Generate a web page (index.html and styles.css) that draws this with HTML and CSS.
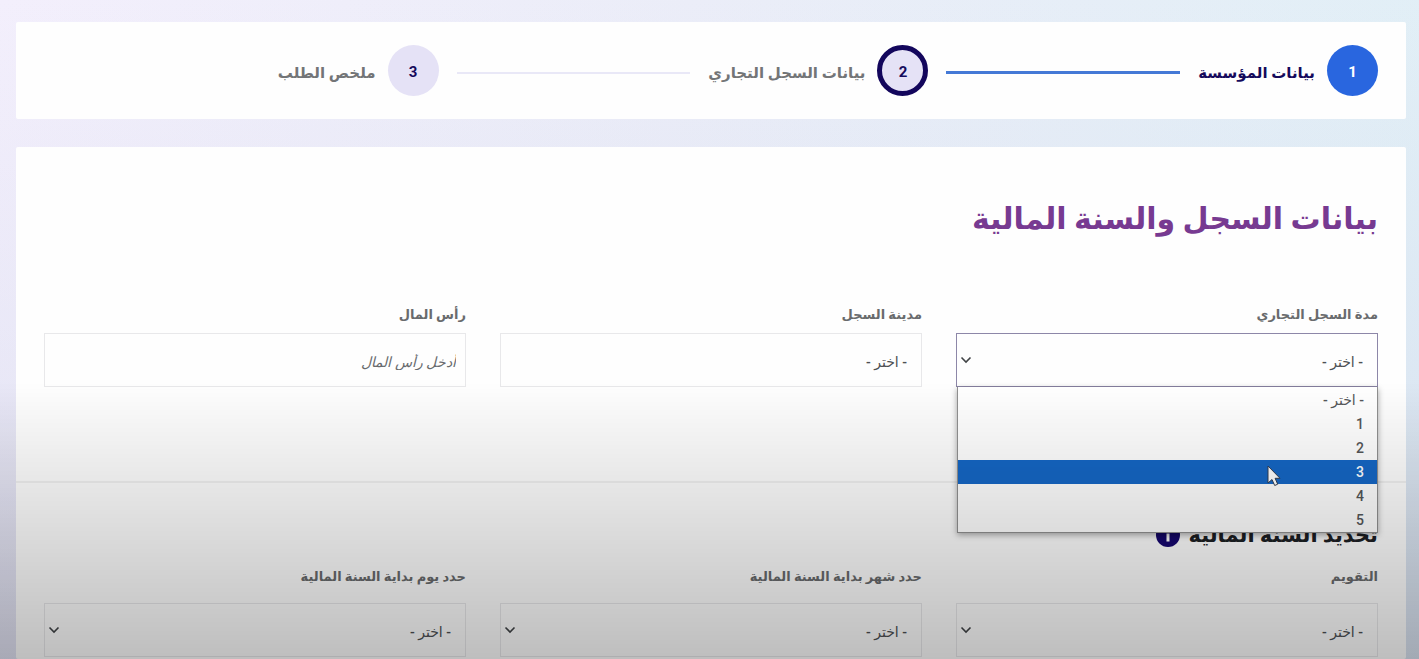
FILE: index.html
```html
<!DOCTYPE html>
<html lang="ar" dir="rtl">
<head>
<meta charset="utf-8">
<meta name="viewport" content="width=device-width, initial-scale=1">
<title>بيانات السجل والسنة المالية</title>
<link rel="stylesheet" href="styles.css">
</head>
<body>
<main class="page">
  <ol class="card stepper">
    <li class="step step-done"><span class="step-number">1</span><span class="step-label">بيانات المؤسسة</span><span class="step-line"></span></li>
    <li class="step step-current" aria-current="step"><span class="step-number">2</span><span class="step-label">بيانات السجل التجاري</span><span class="step-line"></span></li>
    <li class="step step-last"><span class="step-number">3</span><span class="step-label">ملخص الطلب</span></li>
  </ol>

  <form class="card form">
    <section class="section section-record">
      <h1 class="title">بيانات السجل والسنة المالية</h1>
      <div class="fields">
        <div class="field">
          <label class="label" for="duration">مدة السجل التجاري</label>
          <div class="control">
            <select class="box box-open" id="duration"><option>- اختر -</option><option>1</option><option>2</option><option>3</option><option>4</option><option>5</option></select>
            <svg class="chevron" viewBox="0 0 12 8" aria-hidden="true"><path d="M1.500 1.500 6 6l4.500-4.500"/></svg>
            <ul class="menu" role="listbox" aria-label="مدة السجل التجاري">
              <li class="menu-item" role="option">- اختر -</li>
              <li class="menu-item" role="option">1</li>
              <li class="menu-item" role="option">2</li>
              <li class="menu-item menu-item-active" role="option" aria-selected="true">3<svg class="pointer" viewBox="0 0 14 22" aria-hidden="true"><path d="M1 1v17l4-3.500 2.700 6 3-1.300-2.600-5.900H13z"/></svg></li>
              <li class="menu-item" role="option">4</li>
              <li class="menu-item" role="option">5</li>
            </ul>
          </div>
        </div>
        <div class="field">
          <label class="label" for="city">مدينة السجل</label>
          <div class="control"><select class="box" id="city"><option>- اختر -</option></select></div>
        </div>
        <div class="field">
          <label class="label" for="capital">رأس المال</label>
          <div class="control"><input class="box box-text" id="capital" type="text" placeholder="أدخل رأس المال"></div>
        </div>
      </div>
    </section>

    <section class="section section-year">
      <h2 class="subtitle">تحديد السنة المالية
        <svg class="info" viewBox="0 0 24 24" aria-hidden="true"><circle cx="12" cy="12" r="12"/><path d="M10.500 5.500h3v3h-3zM10.500 10.500h3v8h-3z"/></svg>
      </h2>
      <div class="fields fields-year">
        <div class="field">
          <label class="label" for="calendar">التقويم</label>
          <div class="control"><select class="box" id="calendar"><option>- اختر -</option></select><svg class="chevron" viewBox="0 0 12 8" aria-hidden="true"><path d="M1.500 1.500 6 6l4.500-4.500"/></svg></div>
        </div>
        <div class="field">
          <label class="label" for="month">حدد شهر بداية السنة المالية</label>
          <div class="control"><select class="box" id="month"><option>- اختر -</option></select><svg class="chevron" viewBox="0 0 12 8" aria-hidden="true"><path d="M1.500 1.500 6 6l4.500-4.500"/></svg></div>
        </div>
        <div class="field">
          <label class="label" for="day">حدد يوم بداية السنة المالية</label>
          <div class="control"><select class="box" id="day"><option>- اختر -</option></select><svg class="chevron" viewBox="0 0 12 8" aria-hidden="true"><path d="M1.500 1.500 6 6l4.500-4.500"/></svg></div>
        </div>
      </div>
    </section>
  </form>
</main>
<div class="shade"></div>
</body>
</html>
```
FILE: styles.css
```css
* {
  box-sizing: border-box;
}

body {
  margin: 0;
  background:
    linear-gradient(rgba(212, 216, 236, 0), rgba(212, 216, 236, 0.55)),
    linear-gradient(100deg, #f3effc 0%, #ebedf8 45%, #e0eff6 100%);
  color: #555759;
  font-family: Roboto, "DejaVu Sans", sans-serif;
  font-size: 14px;
  line-height: 24px;
}

.page {
  display: flex;
  flex-direction: column;
  gap: 28px;
  min-height: 100vh;
  padding: 22px 13px 0 16px;
}

.card {
  background: #fefefe;
  border-radius: 2px;
}

.stepper {
  display: flex;
  margin: 0;
  padding: 23px 28px;
  list-style: none;
}

.step {
  display: flex;
  flex: 1 1 auto;
  align-items: center;
}

.step-last {
  flex-grow: 1;
}

.step-number {
  display: flex;
  flex: none;
  align-items: center;
  justify-content: center;
  width: 51px;
  height: 51px;
  padding-top: 3px;
  border-radius: 50%;
  background: #e5e2f6;
  color: #150a5c;
  font-size: 15px;
  font-weight: 700;
}

.step-label {
  margin-top: 4px;
  margin-right: 12px;
  color: #737577;
  font-size: 15px;
  font-weight: 700;
  white-space: nowrap;
}

.step-line {
  flex: 1;
  height: 2px;
  margin: 4px 18px 0;
  background: #e9e8f7;
}

.step-done .step-number {
  background: #2966df;
  color: #fff;
}

.step-done .step-label {
  color: #150a5c;
}

.step-done .step-line {
  height: 3px;
  background: #4479d6;
}

.step-current .step-number {
  border: 5px solid #13065c;
}

.form {
  flex: 1;
}

.section {
  padding: 0 28px;
}

.section-record {
  padding-top: 48px;
  padding-bottom: 94px;
  border-bottom: 2px solid #f1f1f1;
}

.title {
  margin: 0 0 60px;
  color: #773a91;
  font-size: 30px;
  font-weight: 700;
  line-height: 48px;
}

.fields {
  display: grid;
  grid-template-columns: repeat(3, 1fr);
  gap: 34px;
}

.field {
  display: flex;
  flex-direction: column;
  gap: 6px;
}

.fields-year .field {
  gap: 14px;
}

.label {
  color: #696b6d;
  font-size: 13px;
  font-weight: 700;
}

.control {
  position: relative;
}

.box {
  display: block;
  width: 100%;
  height: 54px;
  margin: 0;
  padding: 4px 14px 0;
  border: 1px solid #e8e8ea;
  border-radius: 0;
  outline: 0;
  background: transparent;
  color: #4d5053;
  font: inherit;
  font-weight: 500;
  appearance: none;
}

.box-open {
  border-color: #8d87a8;
}

.box-text {
  padding: 4px 9px 0;
}

.box-text::placeholder {
  color: #686b6e;
  font-style: italic;
  opacity: 1;
}

.chevron {
  position: absolute;
  top: 23px;
  left: 4px;
  width: 12px;
  height: 8px;
  fill: none;
  stroke: #404346;
  stroke-width: 1.6;
  pointer-events: none;
}

.menu {
  position: absolute;
  z-index: 2;
  top: 100%;
  right: 0;
  left: 1px;
  margin: 0;
  padding: 1px 0 0;
  border: 1px solid #909090;
  border-top: 0;
  background: #fff;
  box-shadow: 0 2px 6px rgba(0, 0, 0, 0.35);
  list-style: none;
}

.menu-item {
  position: relative;
  height: 24px;
  padding: 0 13px;
  font-weight: 500;
}

.menu-item-active {
  background: #1567c5;
  color: #fff;
}

.pointer {
  position: absolute;
  top: 5px;
  right: 96px;
  width: 14px;
  height: 22px;
  fill: #fff;
  stroke: #333f52;
  stroke-width: 1;
}

.section-year {
  padding-top: 36px;
}

.subtitle {
  display: flex;
  align-items: center;
  gap: 8px;
  margin: 0 0 14px;
  color: #1d2125;
  font-size: 21px;
  font-weight: 700;
  line-height: 32px;
}

.info {
  width: 24px;
  height: 24px;
  fill: #170870;
}

.info path {
  fill: #fff;
}

.shade {
  position: fixed;
  z-index: 3;
  inset: 58vh 0 0;
  background: linear-gradient(rgba(0, 0, 0, 0), rgba(0, 0, 0, 0.09) 36%, rgba(0, 0, 0, 0.25));
  pointer-events: none;
}
```
